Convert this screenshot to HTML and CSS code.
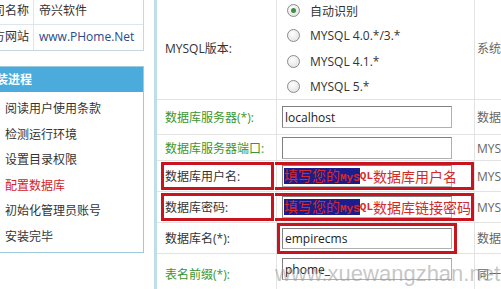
FILE: index.html
```html
<!DOCTYPE html>
<html lang="zh-CN">
<head>
  <meta charset="UTF-8">
  <title>帝国CMS安装 - 配置数据库</title>
  <link rel="stylesheet" href="styles.css">
</head>
<body>
  <div class="page">
    <aside class="side">
      <div class="info">
        <div class="info-row"><span class="info-key">公司名称</span><span class="info-val">帝兴软件</span></div>
        <div class="info-row"><span class="info-key">官方网站</span><span class="info-val link">www.PHome.Net</span></div>
      </div>
      <div class="steps">
        <div class="steps-title">安装进程</div>
        <ul class="steps-list">
          <li>阅读用户使用条款</li>
          <li>检测运行环境</li>
          <li>设置目录权限</li>
          <li class="current">配置数据库</li>
          <li>初始化管理员账号</li>
          <li>安装完毕</li>
        </ul>
      </div>
    </aside>

    <div class="setup">
      <div class="cell label">MYSQL版本:</div>
      <div class="cell value radios">
        <label class="radio"><span class="dot on"></span>自动识别</label>
        <label class="radio"><span class="dot"></span>MYSQL 4.0.*/3.*</label>
        <label class="radio"><span class="dot"></span>MYSQL 4.1.*</label>
        <label class="radio"><span class="dot"></span>MYSQL 5.*</label>
      </div>
      <div class="cell desc">系统会自动识别MYSQL版本</div>

      <div class="cell label green">数据库服务器(*):</div>
      <div class="cell value"><input class="field" type="text" value="localhost"></div>
      <div class="cell desc">数据库服务器地址，一般为localhost</div>

      <div class="cell label green">数据库服务器端口:</div>
      <div class="cell value"><input class="field" type="text" value=""></div>
      <div class="cell desc">MYSQL端口，一般为空</div>

      <div class="cell label mark">数据库用户名:</div>
      <div class="cell value mark-v">
        <div class="field note"><span class="sel">填写您的<span class="latin">MyS</span></span><span class="latin">QL</span>数据库用户名</div>
      </div>
      <div class="cell desc">MYSQL用户名</div>

      <div class="cell label mark">数据库密码:</div>
      <div class="cell value mark-v">
        <div class="field note"><span class="sel">填写您的<span class="latin">MyS</span></span><span class="latin">QL</span>数据库链接密码</div>
      </div>
      <div class="cell desc">MYSQL密码</div>

      <div class="cell label">数据库名(*):</div>
      <div class="cell value"><input class="field boxed" type="text" value="empirecms"></div>
      <div class="cell desc">数据库名称</div>

      <div class="cell label green">表名前缀(*):</div>
      <div class="cell value top"><input class="field" type="text" value="phome_"></div>
      <div class="cell desc">同一数据库安装多个CMS时可改变默认前缀</div>
    </div>
  </div>

  <div class="watermark">www.xuewangzhan.net</div>
</body>
</html>
```

FILE: styles.css
```css
html, body { margin: 0; }
body {
  width: 501px;
  height: 289px;
  overflow: hidden;
  position: relative;
  background: #fff;
  color: #333;
  font: 12px "Open Sans", "Noto Sans CJK SC", sans-serif;
}
.page { display: flex; align-items: flex-start; }

/* left column */
.side { flex: none; width: 174px; margin-left: -30px; }
.info { margin-top: -2px; border: 1px solid #c6d8df; }
.info-row {
  display: grid;
  grid-template-columns: 63px 1fr;
  height: 25px;
  line-height: 24px;
  border-bottom: 1px solid #dde7eb;
}
.info-row:last-child { border-bottom: 0; }
.info-key { text-align: right; padding-right: 4px; border-right: 1px solid #dde7eb; }
.info-val { padding-left: 5px; }
.link { color: #2a4a88; }

.steps { margin-top: 15px; border: 1px solid #9fcadb; }
.steps-title {
  height: 25px;
  line-height: 25px;
  padding-left: 13px;
  background: #4aabdc;
  color: #fff;
  font-weight: bold;
}
.steps-list { list-style: none; margin: 0; padding: 4px 0 3px 34px; }
.steps-list li { height: 25.5px; line-height: 25.5px; }
.steps-list .current { color: #d2232a; }

/* settings table */
.setup {
  flex: none;
  margin-left: 10px;
  margin-top: -4px;
  border-left: 3px solid #bcdfea;
  display: grid;
  grid-template-columns: 120px 198px 200px;
  grid-template-rows: 104px 35px 26px 31px 31px 31px 40px;
}
.cell {
  display: flex;
  align-items: center;
  border-bottom: 1px solid #e3e3e3;
  white-space: nowrap;
}
.label { padding-left: 8px; border-right: 1px solid #e3e3e3; }
.green { color: #3b962d; }
.value { padding-left: 5px; border-right: 1px solid #e3e3e3; }
.value.top { align-items: flex-start; padding-top: 4px; }
.desc { padding-left: 2px; color: #666; overflow: hidden; }

.radios { flex-direction: column; align-items: flex-start; padding-top: 2px; }
.radio { display: flex; align-items: center; gap: 10px; height: 25.5px; padding-left: 5px; }
.dot {
  display: grid;
  place-items: center;
  width: 13px;
  height: 13px;
  box-sizing: border-box;
  border: 1px solid #8b8b8b;
  border-radius: 50%;
  background: radial-gradient(circle at 40% 35%, #fff, #dcdcdc);
}
.dot.on::after {
  content: "";
  width: 5px;
  height: 5px;
  border-radius: 50%;
  background: #3f8f3f;
}

.field {
  width: 170px;
  height: 22px;
  box-sizing: border-box;
  margin: 0;
  padding: 0 2px;
  border: 1px solid #b0b0b0;
  border-top-color: #808080;
  border-left-color: #808080;
  font: inherit;
  color: #222;
  background: #fff;
}
.field.boxed { height: 21px; outline: 3px solid #c8141e; outline-offset: 2px; }
.note {
  display: flex;
  align-items: center;
  padding-left: 1px;
  white-space: nowrap;
  font-size: 14px;
  color: #d42a2a;
  overflow: visible;
}
.sel { display: inline-block; height: 16px; line-height: 16px; background: #1c1c8c; }
.latin { font: bold 11px "Liberation Mono", monospace; }

/* red annotation frames */
.mark, .mark-v { position: relative; }
.mark::after,
.mark-v::after {
  content: "";
  position: absolute;
  top: 1px;
  bottom: 1px;
  border: 3px solid #c8141e;
}
.mark::after { left: 4px; right: 2px; }
.mark-v::after { left: -2px; right: 0; border-left: 0; }

.watermark {
  position: absolute;
  left: 275px;
  top: 263px;
  font: 22px/22px "Liberation Sans", sans-serif;
  color: rgba(150, 150, 150, 0.55);
  pointer-events: none;
}
```
